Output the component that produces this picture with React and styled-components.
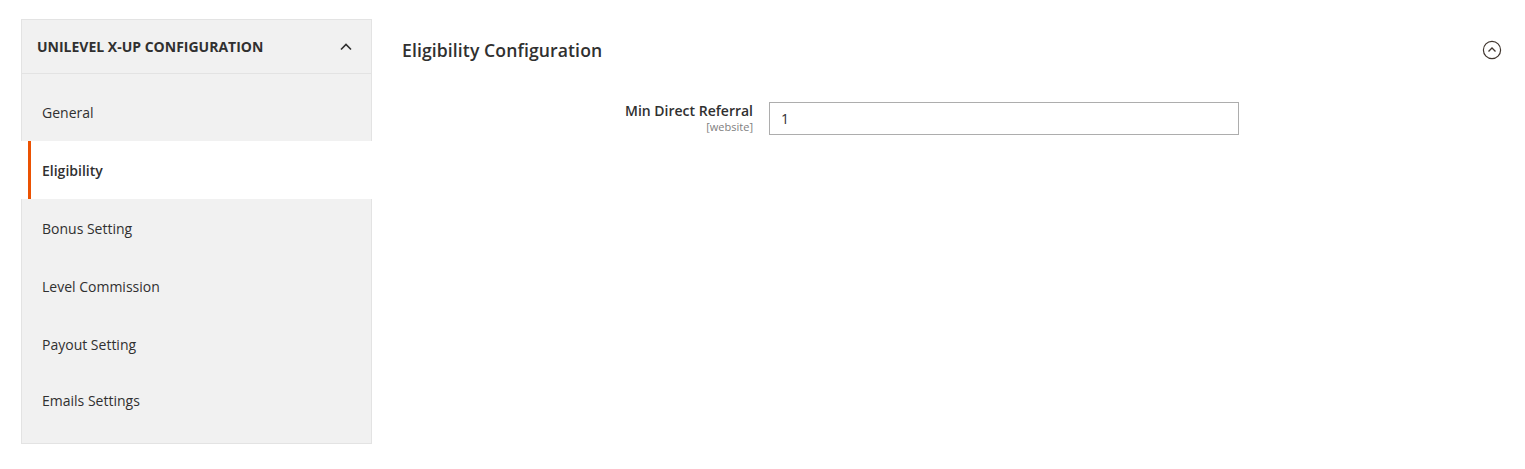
import React from 'react'
import styled, { createGlobalStyle } from 'styled-components'

const GlobalStyle = createGlobalStyle`
  body {
    margin: 0;
    background: #fff;
    font-family: "Open Sans", "Liberation Sans", sans-serif;
    color: #303030;
  }
`

const Page = styled.div`
  display: flex;
  align-items: flex-start;
  padding: 19px 23px 0 21px;
`

const Sidebar = styled.nav`
  width: 351px;
  flex: none;
`

const SideHeader = styled.div`
  display: flex;
  align-items: center;
  justify-content: space-between;
  height: 55px;
  box-sizing: border-box;
  padding: 0 18px 0 15px;
  background: #f1f1f1;
  border: 1px solid #e3e3e3;
  font-size: 14px;
  font-weight: 700;
  color: #303030;
  text-transform: uppercase;
`

const NavList = styled.ul`
  list-style: none;
  margin: 0;
  padding: 0;
`

const NavItem = styled.li`
  display: flex;
  align-items: center;
  height: 58px;
  box-sizing: border-box;
  font-size: 14px;
  color: #303030;
  background: ${({ $active }) => ($active ? '#fff' : '#f1f1f1')};
  border-left: ${({ $active }) => ($active ? '3px solid #eb5202' : '1px solid #e3e3e3')};
  border-right: ${({ $active }) => ($active ? 'none' : '1px solid #e3e3e3')};
  margin-left: ${({ $active }) => ($active ? '7px' : '0')};
  padding-left: ${({ $active }) => ($active ? '11px' : '20px')};
  font-weight: ${({ $active }) => ($active ? 600 : 400)};

  &:first-child {
    height: 67px;
    padding-top: 9px;
  }

  &:last-child {
    height: 71px;
    padding-bottom: 15px;
    border-bottom: 1px solid #e3e3e3;
  }
`

const Content = styled.main`
  flex: 1;
  margin-left: 30px;
`

const SectionHead = styled.div`
  display: flex;
  align-items: center;
  justify-content: space-between;
  height: 62px;
`

const Title = styled.h2`
  margin: 0;
  font-size: 17.6px;
  font-weight: 600;
  color: #303030;
  letter-spacing: 0.1px;
`

const FieldRow = styled.div`
  display: grid;
  grid-template-columns: 351px 470px;
  column-gap: 16px;
  margin-top: 21px;
`

const Label = styled.div`
  text-align: right;
`

const LabelText = styled.div`
  font-size: 14px;
  font-weight: 600;
  line-height: 18px;
  color: #303030;
`

const Scope = styled.div`
  font-size: 11px;
  line-height: 14px;
  color: #808080;
`

const Input = styled.input`
  width: 100%;
  height: 33px;
  box-sizing: border-box;
  border: 1px solid #adadad;
  padding: 0 11px;
  font-family: inherit;
  font-size: 14px;
  color: #303030;
  outline: none;
`

const items = ['General', 'Eligibility', 'Bonus Setting', 'Level Commission', 'Payout Setting', 'Emails Settings']

function ChevronUp() {
  return (
    <svg width="14" height="10" viewBox="0 0 14 10">
      <path d="M2 7.5 L7 2.5 L12 7.5" fill="none" stroke="#303030" strokeWidth="1.6" />
    </svg>
  )
}

function CircleChevron() {
  return (
    <svg width="20" height="20" viewBox="0 0 20 20">
      <circle cx="10" cy="10" r="8.6" fill="none" stroke="#41362f" strokeWidth="1.2" />
      <path d="M6.5 11.5 L10 8 L13.5 11.5" fill="none" stroke="#41362f" strokeWidth="1.3" />
    </svg>
  )
}

export default function App() {
  return (
    <Page>
      <GlobalStyle />
      <Sidebar>
        <SideHeader>
          Unilevel X-Up Configuration
          <ChevronUp />
        </SideHeader>
        <NavList>
          {items.map(item => (
            <NavItem key={item} $active={item === 'Eligibility'}>
              {item}
            </NavItem>
          ))}
        </NavList>
      </Sidebar>
      <Content>
        <SectionHead>
          <Title>Eligibility Configuration</Title>
          <CircleChevron />
        </SectionHead>
        <FieldRow>
          <Label>
            <LabelText>Min Direct Referral</LabelText>
            <Scope>[website]</Scope>
          </Label>
          <Input defaultValue="1" />
        </FieldRow>
      </Content>
    </Page>
  )
}
